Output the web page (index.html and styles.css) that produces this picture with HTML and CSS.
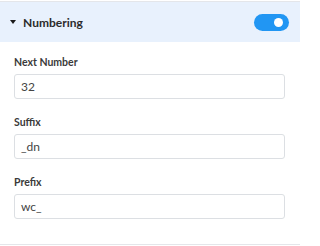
FILE: index.html
```html
<!DOCTYPE html>
<html>
<head>
<meta charset="utf-8">
<link rel="stylesheet" href="styles.css">
</head>
<body>
<div class="panel">
  <div class="panel-header">
    <div class="title">
      <span class="caret"></span>
      <span class="title-text">Numbering</span>
    </div>
    <span class="toggle"><span class="knob"></span></span>
  </div>
  <div class="panel-body">
    <div class="field">
      <label class="label">Next Number</label>
      <div class="input">32</div>
    </div>
    <div class="field">
      <label class="label">Suffix</label>
      <div class="input">_dn</div>
    </div>
    <div class="field">
      <label class="label">Prefix</label>
      <div class="input">wc_</div>
    </div>
  </div>
</div>
</body>
</html>
```
FILE: styles.css
```css
html, body {
  margin: 0;
  padding: 0;
  background: #ffffff;
}
body {
  padding-top: 1px;
  font-family: "Lato", "Open Sans", sans-serif;
}
.panel {
  width: 300px;
  border-top: 1px solid #e4e6ea;
  border-bottom: 1px solid #e4e6ea;
  box-sizing: border-box;
}
.panel-header {
  height: 40px;
  background: #e8f1fd;
  display: flex;
  align-items: center;
  justify-content: space-between;
  padding: 0 11px 0 10px;
}
.title {
  display: flex;
  align-items: center;
}
.caret {
  width: 0;
  height: 0;
  border-left: 3.5px solid transparent;
  border-right: 3.5px solid transparent;
  border-top: 4px solid #1a1a1a;
  margin-right: 7px;
  margin-top: -1px;
}
.title-text {
  font-size: 12px;
  font-weight: 700;
  color: #2b2b2b;
}
.toggle {
  width: 35px;
  height: 17px;
  border-radius: 9px;
  background: #2196f3;
  display: flex;
  align-items: center;
  justify-content: flex-end;
  padding-right: 6px;
  box-sizing: border-box;
}
.knob {
  width: 9px;
  height: 9px;
  border-radius: 50%;
  background: #ffffff;
}
.panel-body {
  padding: 12px 15px 25px 14px;
  display: flex;
  flex-direction: column;
  gap: 15px;
}
.field {
  display: flex;
  flex-direction: column;
  gap: 4px;
}
.label {
  font-size: 10.5px;
  line-height: 16px;
  font-weight: 700;
  color: #3a3a3a;
}
.input {
  height: 25px;
  box-sizing: border-box;
  border: 1px solid #dcdfe3;
  border-radius: 3px;
  padding: 0 6px;
  font-size: 12px;
  line-height: 23px;
  color: #444444;
}
```
